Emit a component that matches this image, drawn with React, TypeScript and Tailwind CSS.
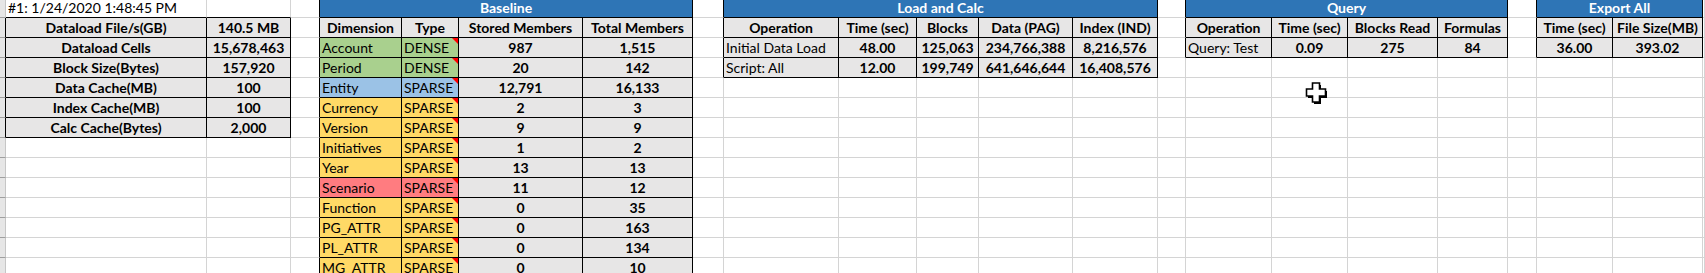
import React from "react";

/* ── Types ─────────────────────────────────────────────────────────────────── */
type Fill = "none" | "gray" | "blue" | "green" | "sky" | "amber" | "rose" | "strip";

interface Cell {
  text?: string;
  span?: number;
  fill?: Fill;
  bold?: boolean;
  left?: boolean;
  white?: boolean;
  flag?: boolean;
  rightBlack?: boolean;
  bottomBlack?: boolean;
  hidden?: boolean;
}

const NCOLS = 23;
const NROWS = 14;

const FILL: Record<Fill, string> = {
  none: "bg-white",
  gray: "bg-[#e7e6e6]",
  blue: "bg-[#2e75b6]",
  green: "bg-[#a9d08e]",
  sky: "bg-[#9bc2e6]",
  amber: "bg-[#ffd966]",
  rose: "bg-[#ff7c80]",
  strip: "bg-[#e6e6e6]",
};

/* ── Sheet data ─────────────────────────────────────────────────────────────── */
const summary: [string, string][] = [
  ["Dataload File/s(GB)", "140.5 MB"],
  ["Dataload Cells", "15,678,463"],
  ["Block Size(Bytes)", "157,920"],
  ["Data Cache(MB)", "100"],
  ["Index Cache(MB)", "100"],
  ["Calc Cache(Bytes)", "2,000"],
];

const dims: [string, string, Fill, string, string][] = [
  ["Account", "DENSE", "green", "987", "1,515"],
  ["Period", "DENSE", "green", "20", "142"],
  ["Entity", "SPARSE", "sky", "12,791", "16,133"],
  ["Currency", "SPARSE", "amber", "2", "3"],
  ["Version", "SPARSE", "amber", "9", "9"],
  ["Initiatives", "SPARSE", "amber", "1", "2"],
  ["Year", "SPARSE", "amber", "13", "13"],
  ["Scenario", "SPARSE", "rose", "11", "12"],
  ["Function", "SPARSE", "amber", "0", "35"],
  ["PG_ATTR", "SPARSE", "amber", "0", "163"],
  ["PL_ATTR", "SPARSE", "amber", "0", "134"],
  ["MG_ATTR", "SPARSE", "amber", "0", "10"],
];

const loadCalc: string[][] = [
  ["Initial Data Load", "48.00", "125,063", "234,766,388", "8,216,576"],
  ["Script: All", "12.00", "199,749", "641,646,644", "16,408,576"],
];

/* ── Build the cell matrix ──────────────────────────────────────────────────── */
function buildSheet(): Cell[][] {
  const g: Cell[][] = Array.from({ length: NROWS }, () =>
    Array.from({ length: NCOLS }, () => ({} as Cell))
  );
  const set = (r: number, c: number, v: Cell) => Object.assign(g[r][c], v);

  // row header sliver
  for (let r = 0; r < NROWS; r++) set(r, 0, { fill: "strip" });

  // timestamp
  set(0, 1, { text: "#1: 1/24/2020 1:48:45 PM", left: true });

  // summary block
  set(0, 1, { bottomBlack: true });
  set(0, 2, { bottomBlack: true });
  summary.forEach(([k, v], i) => {
    const r = i + 1;
    set(r, 0, { rightBlack: true });
    set(r, 1, { text: k, fill: "gray", bold: true, rightBlack: true, bottomBlack: true });
    set(r, 2, { text: v, fill: "gray", bold: true, rightBlack: true, bottomBlack: true });
  });

  // a blue title row spanning cols [c0, c0+n)
  const title = (c0: number, n: number, text: string) => {
    set(0, c0 - 1, { rightBlack: true });
    set(0, c0, { text, span: n, fill: "blue", bold: true, white: true, rightBlack: true, bottomBlack: true });
    for (let k = 1; k < n; k++) set(0, c0 + k, { hidden: true });
  };
  const row = (r: number, c0: number, cells: Cell[]) => {
    set(r, c0 - 1, { rightBlack: true });
    cells.forEach((cell, k) =>
      set(r, c0 + k, { fill: "gray", bold: true, rightBlack: true, bottomBlack: true, ...cell })
    );
  };

  // Baseline
  title(4, 4, "Baseline");
  row(1, 4, ["Dimension", "Type", "Stored Members", "Total Members"].map((t) => ({ text: t })));
  dims.forEach(([d, t, f, s, tot], i) =>
    row(i + 2, 4, [
      { text: d, fill: f, bold: false, left: true },
      { text: t, fill: f, bold: false, left: true, flag: true },
      { text: s },
      { text: tot },
    ])
  );

  // Load and Calc
  title(9, 5, "Load and Calc");
  row(1, 9, ["Operation", "Time (sec)", "Blocks", "Data (PAG)", "Index (IND)"].map((t) => ({ text: t })));
  loadCalc.forEach((vals, i) =>
    row(i + 2, 9, vals.map((t, k) => (k === 0 ? { text: t, bold: false, left: true } : { text: t })))
  );

  // Query
  title(15, 4, "Query");
  row(1, 15, ["Operation", "Time (sec)", "Blocks Read", "Formulas"].map((t) => ({ text: t })));
  row(2, 15, [{ text: "Query: Test", bold: false, left: true }, { text: "0.09" }, { text: "275" }, { text: "84" }]);

  // Export All
  title(20, 2, "Export All");
  row(1, 20, [{ text: "Time (sec)" }, { text: "File Size(MB)" }]);
  row(2, 20, [{ text: "36.00" }, { text: "393.02" }]);

  return g;
}

const SPAN: Record<number, string> = {
  1: "",
  2: "col-span-2",
  4: "col-span-4",
  5: "col-span-5",
};

/* ── Cursor (Excel cell-select cross) ───────────────────────────────────────── */
const CrossCursor = () => (
  <svg
    className="absolute left-[1305px] top-[81px]"
    width="24"
    height="24"
    viewBox="0 0 24 24"
  >
    {/* drop shadow */}
    <path d="M9 4h7v6h6v7h-6v6H9v-6H3v-7h6z" fill="#000" />
    <path
      d="M7.5 2h7v6h6v7h-6v6h-7v-6h-6V8h6z"
      fill="#fff"
      stroke="#000"
      strokeWidth="1.6"
    />
  </svg>
);

/* ── Main component ─────────────────────────────────────────────────────────── */
export default function App() {
  const sheet = buildSheet();

  return (
    <div className="relative h-[273px] w-[1705px] overflow-hidden bg-white font-['Lato','Carlito','Liberation_Sans',sans-serif] text-[14px] leading-none text-black">
      <div className="grid grid-cols-[6px_201px_84px_29px_82px_57px_124px_110px_31px_115px_78px_62px_94px_85px_28px_86px_76px_90px_70px_29px_76px_90px_2px] grid-rows-[18px_repeat(13,20px)]">
        {sheet.map((cells, r) =>
          cells.map((c, k) => {
            if (c.hidden) return null;
            const fill = FILL[c.fill ?? "none"];
            return (
              <div
                key={`${r}-${k}`}
                className={[
                  "relative flex items-end overflow-visible whitespace-nowrap border-r border-b pb-[2px]",
                  SPAN[c.span ?? 1],
                  fill,
                  c.rightBlack ? "border-r-black" : k === 0 ? "border-r-[#c6c6c6]" : "border-r-[#d4d4d4]",
                  c.bottomBlack ? "border-b-black" : k === 0 ? "border-b-[#9f9f9f]" : "border-b-[#d4d4d4]",
                  c.left ? "justify-start pl-[2px]" : "justify-center",
                  c.bold ? "font-bold" : "font-normal",
                  c.white ? "text-white" : "",
                ].join(" ")}
              >
                {c.text}
                {c.flag && (
                  <span className="absolute right-0 top-0 h-0 w-0 border-l-[6px] border-t-[6px] border-l-transparent border-t-[#ff0000]" />
                )}
              </div>
            );
          })
        )}
      </div>
      <CrossCursor />
    </div>
  );
}
